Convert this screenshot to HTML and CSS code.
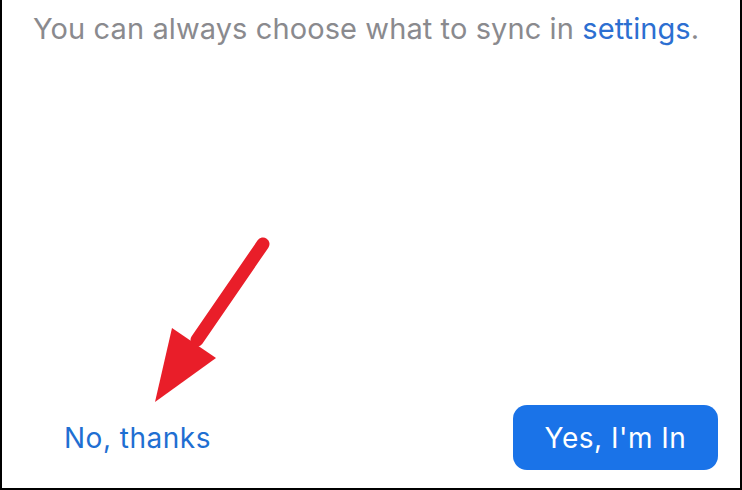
FILE: index.html
```html
<!DOCTYPE html>
<html>
<head>
<meta charset="utf-8">
<link rel="stylesheet" href="styles.css">
</head>
<body>
<div class="frame">
  <p class="note">You can always choose what to sync in <span class="link">settings</span>.</p>
  <div class="actions">
    <span class="decline">No, thanks</span>
    <span class="accept">Yes, I'm In</span>
  </div>
  <svg class="arrow" width="742" height="490" viewBox="0 0 742 490">
    <line x1="263" y1="244" x2="197" y2="340" stroke="#e91e29" stroke-width="13" stroke-linecap="round"/>
    <polygon points="172,328 216,358 155,402" fill="#e91e29"/>
  </svg>
</div>
</body>
</html>
```

FILE: styles.css
```css
html, body {
  margin: 0;
  padding: 0;
  background: #fff;
}
.frame {
  position: relative;
  width: 742px;
  height: 490px;
  box-sizing: border-box;
  border-left: 2px solid #000;
  border-right: 2px solid #000;
  border-bottom: 2px solid #000;
  display: flex;
  flex-direction: column;
  justify-content: space-between;
  font-family: Inter, Roboto, sans-serif;
}
.note {
  margin: 0;
  padding: 11px 0 0 31px;
  font-size: 29px;
  letter-spacing: 0.1px;
  line-height: 36px;
  color: #8a8a8e;
}
.link {
  color: #2c6fd1;
}
.actions {
  display: flex;
  justify-content: space-between;
  align-items: center;
  padding: 0 22px 18px 62px;
}
.decline {
  font-size: 28px;
  letter-spacing: 0.5px;
  color: #1f6fd2;
}
.accept {
  width: 205px;
  height: 65px;
  border-radius: 14px;
  background: #1a73e8;
  color: #fff;
  font-size: 28px;
  letter-spacing: 0.5px;
  display: flex;
  align-items: center;
  justify-content: center;
}
.arrow {
  position: absolute;
  left: -2px;
  top: 0;
  pointer-events: none;
}
```
